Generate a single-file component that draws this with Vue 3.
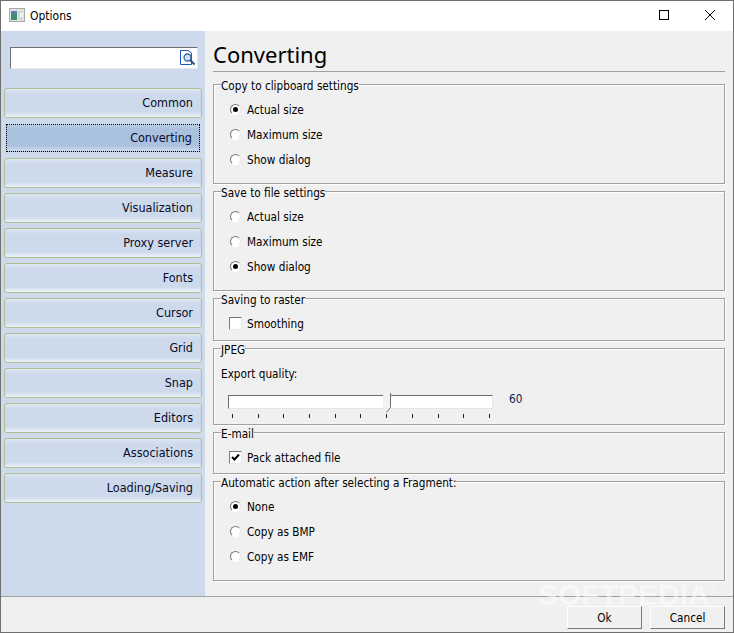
<script setup>
const navItems = ['Common', 'Converting', 'Measure', 'Visualization', 'Proxy server', 'Fonts', 'Cursor', 'Grid', 'Snap', 'Editors', 'Associations', 'Loading/Saving']
const selectedNav = 'Converting'

const groups = [
  { title: 'Copy to clipboard settings', kind: 'radio', height: 100, options: [
    { label: 'Actual size', on: true }, { label: 'Maximum size' }, { label: 'Show dialog' }
  ] },
  { title: 'Save to file settings', kind: 'radio', height: 100, options: [
    { label: 'Actual size' }, { label: 'Maximum size' }, { label: 'Show dialog', on: true }
  ] },
  { title: 'Saving to raster', kind: 'check', height: 43, options: [{ label: 'Smoothing' }] },
  { title: 'JPEG', kind: 'slider', height: 77, options: [] },
  { title: 'E-mail', kind: 'check', height: 42, options: [{ label: 'Pack attached file', on: true }] },
  { title: 'Automatic action after selecting a Fragment:', kind: 'radio', height: 100, options: [
    { label: 'None', on: true }, { label: 'Copy as BMP' }, { label: 'Copy as EMF' }
  ] }
]

const ticks = Array.from({ length: 11 })
</script>

<template>
  <div class="window">
    <header class="titlebar">
      <svg class="app-icon" width="16" height="14" viewBox="0 0 16 14">
        <rect x="0.5" y="0.5" width="15" height="13" fill="#e4e4e4" stroke="#a8a8a8" />
        <rect x="2" y="3" width="6" height="9" fill="#3f8a78" />
        <rect x="2" y="3" width="6" height="3" fill="#5a7ea6" />
        <rect x="9" y="3" width="5" height="9" fill="#cfdad4" />
        <rect x="11" y="5" width="3" height="4" fill="#f4f4f4" />
      </svg>
      <span class="title">Options</span>
      <div class="controls">
        <svg width="46" height="30" viewBox="0 0 46 30">
          <rect x="18.5" y="9.5" width="9" height="9" fill="none" stroke="#000" />
        </svg>
        <svg width="46" height="30" viewBox="0 0 46 30">
          <path d="M18 9 L28 19 M28 9 L18 19" fill="none" stroke="#000" />
        </svg>
      </div>
    </header>

    <div class="body">
      <aside class="sidebar">
        <div class="search-wrap">
          <div class="search">
            <svg class="search-icon" width="16" height="16" viewBox="0 0 16 16">
              <path d="M0.5 0.5 H8 L11.5 3 V14.5 H0.5 Z" fill="#fff" stroke="#1c56c0" />
              <circle cx="7.5" cy="7.5" r="3.5" fill="#cfe2f6" stroke="#34659c" stroke-width="1.3" />
              <path d="M10 10 L14.5 14.5" stroke="#2c4f7c" stroke-width="2" />
            </svg>
          </div>
        </div>
        <nav class="nav">
          <div
            v-for="item in navItems"
            :key="item"
            class="nav-item"
            :class="{ selected: item === selectedNav }"
          >{{ item }}</div>
        </nav>
      </aside>

      <main class="content">
        <h1 class="heading">Converting</h1>
        <div class="groups">
          <fieldset v-for="group in groups" :key="group.title" class="group" :style="{ height: group.height + 'px' }">
            <legend>{{ group.title }}</legend>

            <template v-if="group.kind === 'radio'">
              <div v-for="opt in group.options" :key="opt.label" class="row">
                <span class="radio" :class="{ on: opt.on }"></span>
                <span>{{ opt.label }}</span>
              </div>
            </template>

            <template v-else-if="group.kind === 'check'">
              <div v-for="opt in group.options" :key="opt.label" class="row">
                <span class="check">
                  <svg v-if="opt.on" width="11" height="11" viewBox="0 0 11 11">
                    <path d="M2 5 L4.5 7.5 L9 2.5" fill="none" stroke="#000" stroke-width="2" />
                  </svg>
                </span>
                <span>{{ opt.label }}</span>
              </div>
            </template>

            <template v-else>
              <div class="quality-label">Export quality:</div>
              <div class="slider-row">
                <div class="slider">
                  <div class="track">
                    <svg class="thumb" width="9" height="20" viewBox="0 0 9 20">
                      <path d="M0 0 H7 V14 L3.5 19 L0 15 Z" fill="#f2f2f2" />
                      <path d="M7.5 0 V14.5 L3.5 19.5" fill="none" stroke="#6e6e6e" />
                    </svg>
                  </div>
                  <div class="ticks">
                    <span v-for="(t, i) in ticks" :key="i" class="tick"></span>
                  </div>
                </div>
                <span class="slider-value">60</span>
              </div>
            </template>
          </fieldset>
        </div>
      </main>
    </div>

    <footer class="footer">
      <button class="btn">Ok</button>
      <button class="btn">Cancel</button>
    </footer>

    <div class="watermark">SOFTPEDIA<sup>®</sup></div>
  </div>
</template>

<style>
body {
  margin: 0;
}
</style>

<style scoped>
.window {
  position: relative;
  width: 734px;
  height: 633px;
  box-sizing: border-box;
  display: flex;
  flex-direction: column;
  background: #f0f0f0;
  border: 1px solid #6f6f6f;
  font-family: "DejaVu Sans Condensed", "DejaVu Sans", sans-serif;
  font-size: 11.7px;
  color: #000;
  overflow: hidden;
}

.titlebar {
  height: 30px;
  flex: none;
  display: flex;
  align-items: center;
  background: #fff;
  padding-left: 8px;
}

.app-icon {
  margin-top: -2px;
}

.title {
  margin-left: 5px;
  font-size: 12px;
}

.controls {
  margin-left: auto;
  display: flex;
}

.controls svg {
  display: block;
}

.body {
  flex: 1;
  display: flex;
  min-height: 0;
}

.sidebar {
  width: 204px;
  flex: none;
  background: #cddaec;
  box-sizing: border-box;
  padding-top: 16px;
}

.search-wrap {
  padding: 0 7px 0 9px;
}

.search {
  height: 22px;
  box-sizing: border-box;
  background: #fff;
  border: 1px solid;
  border-color: #6e6e6e #eaeaea #eaeaea #6e6e6e;
  display: flex;
  justify-content: flex-end;
  align-items: center;
  padding-right: 1px;
}

.nav {
  margin-top: 19px;
  padding: 0 3px 0 3px;
  display: flex;
  flex-direction: column;
  gap: 5px;
}

.nav-item {
  height: 30px;
  box-sizing: border-box;
  border: 1px solid #aebf94;
  border-radius: 3px;
  background: linear-gradient(#dde6f2 0, #cddaec 5px, #cddaec 23px, #edf2f8 28px);
  text-align: right;
  padding-right: 8px;
  font-size: 12.5px;
  line-height: 28px;
  color: #0a0a28;
}

.nav-item.selected {
  margin: 1px 2px;
  height: 28px;
  border: 1px dotted #000;
  border-radius: 0;
  background: linear-gradient(#bccde3 0, #a9c0de 4px, #a9c0de 20px, #cddaec 26px);
  padding-right: 7px;
  line-height: 26px;
}

.content {
  flex: 1;
  padding: 8px 8px 0 8px;
  min-width: 0;
}

.heading {
  margin: 0;
  height: 32px;
  font-family: "Noto Sans", sans-serif;
  font-size: 22px;
  font-weight: 400;
  line-height: 30px;
  border-bottom: 1px solid #a0a0a0;
}

.groups {
  margin-top: 12px;
  display: flex;
  flex-direction: column;
  gap: 7px;
}

.group {
  margin: 0;
  padding: 0;
  min-width: 0;
  box-sizing: border-box;
  border: 1px solid #a0a0a0;
  box-shadow: 1px 1px 0 #fff, inset 1px 1px 0 #fff;
}

/* legend sits on the frame line, text hangs a bit below it */
.group legend {
  padding: 0;
  margin-left: 7px;
  height: 1px;
  line-height: 1px;
  position: relative;
  top: 2px;
}

.row {
  height: 25px;
  display: flex;
  align-items: center;
  gap: 6px;
  padding-left: 16px;
}

.group > .row:first-of-type {
  margin-top: 12px;
}

.radio {
  width: 11px;
  height: 11px;
  box-sizing: border-box;
  border-radius: 50%;
  border: 1px solid;
  border-color: #777 #e8e8e8 #fff #777;
  background: #fff;
  display: flex;
  align-items: center;
  justify-content: center;
}

.radio.on::after {
  content: "";
  width: 5px;
  height: 5px;
  border-radius: 50%;
  background: #000;
}

.check {
  width: 13px;
  height: 13px;
  margin-left: -1px;
  margin-right: -1px;
  box-sizing: border-box;
  border: 1px solid;
  border-color: #777 #e8e8e8 #e8e8e8 #777;
  background: #fff;
  display: flex;
  align-items: center;
  justify-content: center;
}

.quality-label {
  margin: 18px 0 0 7px;
  line-height: 15px;
}

.slider-row {
  margin: 13px 0 0 14px;
  display: flex;
  align-items: flex-start;
}

.slider {
  width: 265px;
}

.track {
  position: relative;
  height: 14px;
  box-sizing: border-box;
  background: #fff;
  border: 1px solid;
  border-color: #6e6e6e #e6e6e6 #e6e6e6 #6e6e6e;
}

.thumb {
  position: absolute;
  left: 154px;
  top: -3px;
}

.ticks {
  margin-top: 5px;
  padding: 0 3px 0 4px;
  display: flex;
  justify-content: space-between;
}

.tick {
  width: 1px;
  height: 4px;
  background: #222;
}

.slider-value {
  margin: -3px 0 0 16px;
  line-height: 14px;
  color: #0a2050;
}

.footer {
  height: 36px;
  flex: none;
  display: flex;
  justify-content: flex-end;
  gap: 8px;
  box-sizing: border-box;
  border-top: 1px solid #a0a0a0;
  padding: 9px 8px 0 0;
}

.btn {
  width: 75px;
  height: 23px;
  box-sizing: border-box;
  background: #f0f0f0;
  border: 1px solid;
  border-color: #fff #7a7a7a #7a7a7a #fff;
  font: inherit;
  padding: 0;
}

.watermark {
  position: absolute;
  left: 537px;
  top: 576px;
  font-family: "Liberation Sans", sans-serif;
  font-size: 30px;
  font-weight: 700;
  line-height: 35px;
  color: rgba(255, 255, 255, 0.5);
  pointer-events: none;
}

.watermark sup {
  font-size: 8px;
  line-height: 0;
}
</style>
